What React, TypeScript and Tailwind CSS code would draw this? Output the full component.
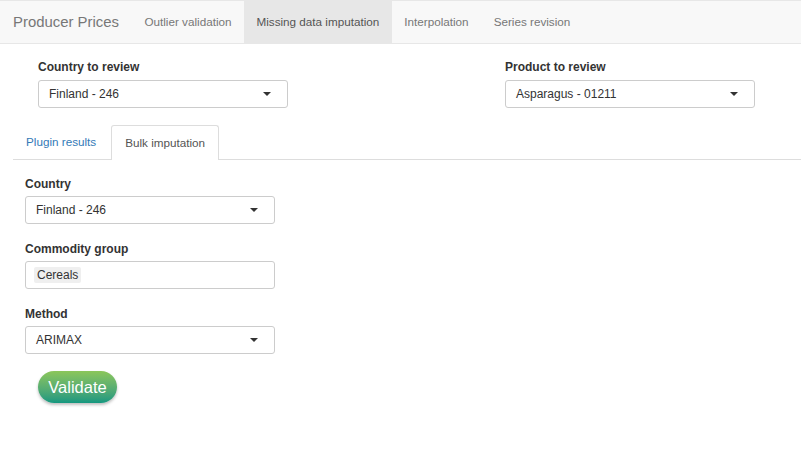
import React from "react";

const font = { fontFamily: '"Liberation Sans", Arial, sans-serif' };

function Caret() {
  return (
    <span className="h-0 w-0 border-x-[4px] border-t-[4px] border-x-transparent border-t-[#333]" />
  );
}

function SelectBox({ value }: { value: string }) {
  return (
    <div className="flex h-[28px] w-[250px] items-center justify-between rounded-[3px] border border-[#ccc] bg-white pl-[10px] pr-[16px] text-[12px] text-[#333]">
      <span>{value}</span>
      <Caret />
    </div>
  );
}

function Field({ label, gap = "mb-[4px]", children }: { label: string; gap?: string; children: React.ReactNode }) {
  return (
    <div className="flex flex-col">
      <label className={`${gap} text-[12px] font-bold leading-[17px] text-[#333]`}>{label}</label>
      {children}
    </div>
  );
}

const navItems = ["Outlier validation", "Missing data imputation", "Interpolation", "Series revision"];

export default function App() {
  return (
    <div className="min-h-[460px] w-[801px] bg-white" style={font}>
      <nav className="flex h-[44px] border-y border-[#e7e7e7] bg-[#f8f8f8]">
        <div className="flex items-center px-[13px] text-[14.9px] text-[#777]">Producer Prices</div>
        {navItems.map((item) => (
          <div
            key={item}
            className={
              item === "Missing data imputation"
                ? "flex items-center bg-[#e7e7e7] px-[12.5px] text-[11.7px] text-[#555]"
                : "flex items-center px-[12.5px] text-[11.7px] text-[#777]"
            }
          >
            {item}
          </div>
        ))}
      </nav>

      <div className="flex pl-[38px] pt-[15px]">
        <div className="w-[467px]">
          <Field label="Country to review">
            <SelectBox value="Finland - 246" />
          </Field>
        </div>
        <div className="w-[250px]">
          <Field label="Product to review">
            <SelectBox value="Asparagus - 01211" />
          </Field>
        </div>
      </div>

      <div className="ml-[13px] mt-[17px] flex h-[35px] items-end border-b border-[#ddd] text-[11.7px]">
        <div className="mr-[2px] flex h-[34px] items-center px-[13px] text-[#337ab7]">Plugin results</div>
        <div className="-mb-px flex h-[35px] items-center rounded-t-[3px] border border-b-0 border-[#ddd] bg-white px-[13px] text-[#555]">
          Bulk imputation
        </div>
      </div>

      <div className="flex flex-col gap-[17px] pl-[25px] pt-[16px]">
        <Field label="Country" gap="mb-[3px]">
          <SelectBox value="Finland - 246" />
        </Field>
        <Field label="Commodity group" gap="mb-[3px]">
          <div className="flex h-[28px] w-[250px] items-center rounded-[3px] border border-[#ccc] bg-white pl-[8px] text-[12px] text-[#333]">
            <span className="rounded-[2px] bg-[#efefef] px-[3px] leading-[16px]">Cereals</span>
          </div>
        </Field>
        <Field label="Method" gap="mb-[3px]">
          <SelectBox value="ARIMAX" />
        </Field>
      </div>

      <div className="pl-[38px] pt-[17px]">
        <button className="flex h-[32px] w-[79px] items-center justify-center rounded-full bg-gradient-to-b from-[#8bc659] to-[#12987f] text-[16.5px] text-white shadow-[0_2px_3px_rgba(0,0,0,0.25)]">
          Validate
        </button>
      </div>
    </div>
  );
}
